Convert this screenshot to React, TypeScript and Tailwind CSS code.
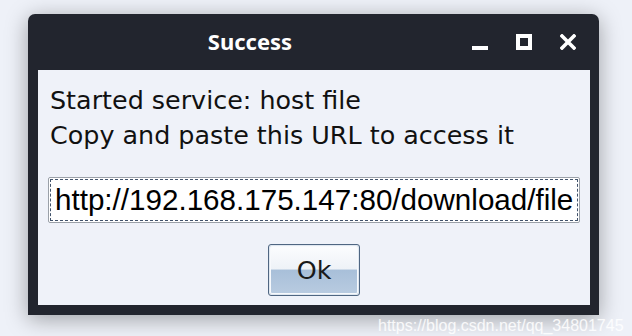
export default function App() {
	return (
		<div className="relative w-[632px] h-[336px] overflow-hidden bg-[#eef1f8] pt-[14px] pl-[28px]">
			<div className="flex flex-col w-[571px] h-[301px] bg-[#22252e] rounded-t-[7px] shadow-[0_4px_22px_rgba(0,0,0,0.35)]">
				<div className="flex items-center h-[56px] shrink-0">
					<div className="w-[444px] text-center text-white font-bold text-[22px] font-['Noto_Sans',sans-serif] leading-none pb-[2px]">
						Success
					</div>
					<div className="flex items-center ml-auto mr-[23px] gap-[28px]">
						<div className="w-[16px] h-[16px] flex items-end">
							<div className="w-[16px] h-[4px] bg-white" />
						</div>
						<div className="w-[16px] h-[16px] border-[4px] border-white" />
						<svg width="16" height="16" viewBox="0 0 16 16">
							<path d="M2 2 L14 14 M14 2 L2 14" stroke="#ffffff" strokeWidth="3.6" strokeLinecap="square" />
						</svg>
					</div>
				</div>
				<div className="flex flex-col flex-1 ml-[10px] mr-[9px] mb-[10px] bg-[#eff2f9] font-['DejaVu_Sans',sans-serif] text-[25.4px] leading-[35px] text-[#111]">
					<div className="pl-[12px] pt-[13px]">
						<div>Started service: host file</div>
						<div>Copy and paste this URL to access it</div>
					</div>
					<div className="mx-[10px] mt-[24px] h-[46px] border border-[#9aa0a8] bg-white p-[1px] rounded-[2px]">
						<div className="h-full border border-dashed border-[#41536b] flex items-center pl-[4px] overflow-hidden whitespace-nowrap font-['Liberation_Sans',Arial,sans-serif] text-[29.6px] leading-none text-black">
							http://192.168.175.147:80/download/file
						</div>
					</div>
					<div className="flex justify-center mt-[21px]">
						<button className="w-[92px] h-[52px] rounded-[3px] border border-[#4f6682] p-[1px] bg-[#dfe7f0]">
							<div className="h-full w-full rounded-[2px] border border-[#f7f9fc] bg-[linear-gradient(to_bottom,#fbfcfe_0%,#eef2f7_48%,#a8bfd9_50%,#b8cbe0_100%)] flex items-center justify-center text-[25.4px] text-[#1a1a1a] font-['DejaVu_Sans',sans-serif]">
								Ok
							</div>
						</button>
					</div>
				</div>
			</div>
			<div className="absolute left-[378px] top-[314px] text-[16px] font-['Liberation_Sans',Arial,sans-serif] text-white/85 whitespace-nowrap">
				https://blog.csdn.net/qq_34801745
			</div>
		</div>
	)
}
